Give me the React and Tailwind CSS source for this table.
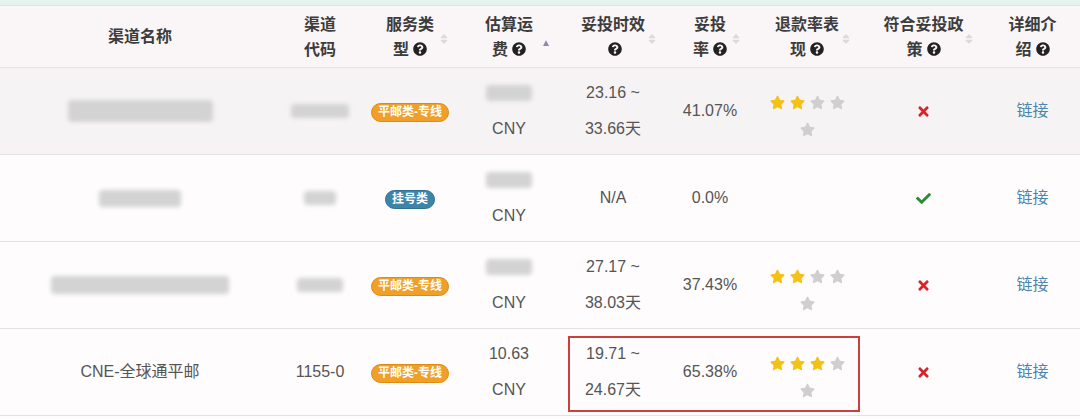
import { FaQuestionCircle, FaSort, FaStar, FaTimes, FaCheck } from 'react-icons/fa';

const cols = ['w-[280px]', 'w-[80px]', 'w-[100px]', 'w-[98px]', 'w-[110px]', 'w-[84px]', 'w-[110px]', 'w-[123px]', 'w-[95px]'];

const Q = () => <FaQuestionCircle size={14} className="inline-block align-[-1px] ml-1 text-[#222]" />;

const headers = [
  { lines: ['渠道名称'] },
  { lines: ['渠道', '代码'] },
  { lines: ['服务类', '型'], q: true, sort: 'both' },
  { lines: ['估算运', '费'], q: true, sort: 'up' },
  { lines: ['妥投时效', ''], q: true, sort: 'both' },
  { lines: ['妥投', '率'], q: true, sort: 'both' },
  { lines: ['退款率表', '现'], q: true, sort: 'both' },
  { lines: ['符合妥投政', '策'], q: true, sort: 'both' },
  { lines: ['详细介', '绍'], q: true },
];

const rows = [
  { bg: 'bg-[#f6f3f4]', name: { w: 'w-[145px]', h: 'h-[22px]' }, code: 'w-[58px]', badge: 'orange', fee: null, time: ['23.16 ~', '33.66天'], rate: '41.07%', stars: 2, ok: false },
  { bg: 'bg-[#fefcfd]', name: { w: 'w-[82px]', h: 'h-[17px]' }, code: 'w-[32px]', badge: 'blue', fee: null, time: ['N/A'], rate: '0.0%', stars: 0, ok: true },
  { bg: 'bg-[#fefcfd]', name: { w: 'w-[178px]', h: 'h-[18px]' }, code: 'w-[46px]', badge: 'orange', fee: null, time: ['27.17 ~', '38.03天'], rate: '37.43%', stars: 2, ok: false },
  { bg: 'bg-[#fefcfd]', nameText: 'CNE-全球通平邮', codeText: '1155-0', badge: 'orange', fee: '10.63', time: ['19.71 ~', '24.67天'], rate: '65.38%', stars: 3, ok: false },
];

const Badge = ({ type }) =>
  type === 'orange' ? (
    <span className="inline-block rounded-full bg-[#f0a028] border border-[#e08a10] px-[6px] text-[12px] leading-[17px] font-bold text-white">平邮类-专线</span>
  ) : (
    <span className="inline-block rounded-full bg-[#3d84a8] border border-[#2f6f90] px-[6px] text-[12px] leading-[17px] font-bold text-white">挂号类</span>
  );

const Stars = ({ n }) => (
  <div className="mx-auto w-[80px] flex flex-wrap justify-center pt-[10px]">
    {[0, 1, 2, 3, 4].map((i) => (
      <span key={i} className="w-[20px] h-[27px] flex items-center justify-center">
        <FaStar size={15} className={i < n ? 'text-[#f5c116]' : 'text-[#cfcfcf]'} />
      </span>
    ))}
  </div>
);

const Blur = ({ w, h = 'h-[16px]' }) => <div className={`mx-auto ${w} ${h} bg-[#d3d3d3] rounded-sm blur-[2px]`} />;

export default function App() {
  return (
    <div className="w-[1080px] h-[419px] bg-[#fefcfd] overflow-hidden relative" style={{ fontFamily: '"Liberation Sans", "Noto Sans CJK SC", sans-serif' }}>
      <div className="h-[5px] bg-[#e4f3ee]" />
      <table className="table-fixed border-collapse w-[1080px] text-center">
        <colgroup>
          {cols.map((c, i) => (
            <col key={i} className={c} />
          ))}
        </colgroup>
        <thead>
          <tr className="bg-[#faf5f7] border-t border-b border-[#e6e1e3]">
            {headers.map((h, i) => (
              <th key={i} className="relative h-[62px] align-middle text-[16px] leading-[25px] font-bold text-[#3c3c3c]">
                {h.lines.map((l, j) => (
                  <div key={j}>
                    {l}
                    {h.q && j === h.lines.length - 1 && <Q />}
                  </div>
                ))}
                {h.sort === 'both' && <FaSort size={12} className="absolute right-[10px] top-[27px] text-[#dcd9db]" />}
                {h.sort === 'up' && <span className="absolute right-[7px] top-[24px] text-[10px] text-[#8a88b0]">▲</span>}
              </th>
            ))}
          </tr>
        </thead>
        <tbody className="text-[16px] text-[#555]">
          {rows.map((r, i) => (
            <tr key={i} className={`${r.bg} border-b border-[#e6e1e3]`}>
              <td className="h-[87px] align-middle">{r.nameText ? r.nameText : <Blur w={r.name.w} h={r.name.h} />}</td>
              <td className="align-middle">{r.codeText ? r.codeText : <Blur w={r.code} h="h-[14px]" />}</td>
              <td className="align-middle">
                <Badge type={r.badge} />
              </td>
              <td className="align-middle leading-[36px]">
                <div>{r.fee ? r.fee : <div className="h-[36px] flex items-center"><Blur w="w-[46px]" h="h-[16px]" /></div>}</div>
                <div>CNY</div>
              </td>
              <td className="align-middle leading-[36px]">
                {r.time.map((t, j) => (
                  <div key={j}>{t}</div>
                ))}
              </td>
              <td className="align-middle">{r.rate}</td>
              <td className="align-middle">{r.stars > 0 && <Stars n={r.stars} />}</td>
              <td className="align-middle">
                {r.ok ? <FaCheck size={15} className="mx-auto text-[#2e8b34]" /> : <FaTimes size={15} className="mx-auto text-[#d8232a]" />}
              </td>
              <td className="align-middle text-[16px] text-[#4a86ad]">链接</td>
            </tr>
          ))}
        </tbody>
      </table>
      <div className="absolute left-[568px] top-[336px] w-[292px] h-[76px] border-2 border-[#c8413e] pointer-events-none" />
    </div>
  );
}
